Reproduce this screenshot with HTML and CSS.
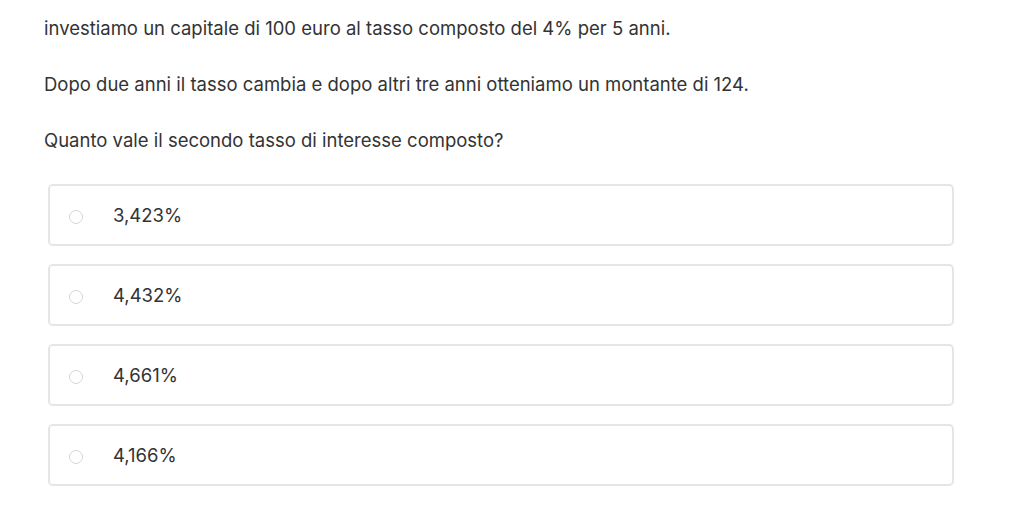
FILE: index.html
```html
<!DOCTYPE html>
<html lang="it">
<head>
<meta charset="utf-8">
<link rel="stylesheet" href="styles.css">
</head>
<body>
<div class="page">
  <p class="text">investiamo un capitale di 100 euro al tasso composto del 4% per 5 anni.</p>
  <p class="text">Dopo due anni il tasso cambia e dopo altri tre anni otteniamo un montante di 124.</p>
  <p class="text">Quanto vale il secondo tasso di interesse composto?</p>
  <div class="options">
    <label class="option"><span class="radio"></span><span class="label">3,423%</span></label>
    <label class="option"><span class="radio"></span><span class="label">4,432%</span></label>
    <label class="option"><span class="radio"></span><span class="label">4,661%</span></label>
    <label class="option"><span class="radio"></span><span class="label">4,166%</span></label>
  </div>
</div>
</body>
</html>
```
FILE: styles.css
```css
html, body {
  margin: 0;
  padding: 0;
  background: #ffffff;
}
.page {
  padding: 14px 70px 0 44px;
  font-family: Inter, "Liberation Sans", Arial, sans-serif;
  color: #333333;
}
.text {
  margin: 0 0 28px 0;
  font-size: 18.5px;
  line-height: 28px;
}
.options {
  display: flex;
  flex-direction: column;
  gap: 18px;
  margin: 30px 0 0 4px;
}
.option {
  display: flex;
  align-items: center;
  height: 58px;
  border: 2px solid #e3e6e8;
  border-radius: 5px;
  padding: 0 0 0 19px;
}
.radio {
  width: 14px;
  height: 14px;
  border: 1px solid #d4d6d8;
  border-radius: 50%;
  box-sizing: border-box;
  margin-right: 30px;
  margin-top: 3px;
}
.label {
  font-size: 18.5px;
  color: #333333;
}
```
